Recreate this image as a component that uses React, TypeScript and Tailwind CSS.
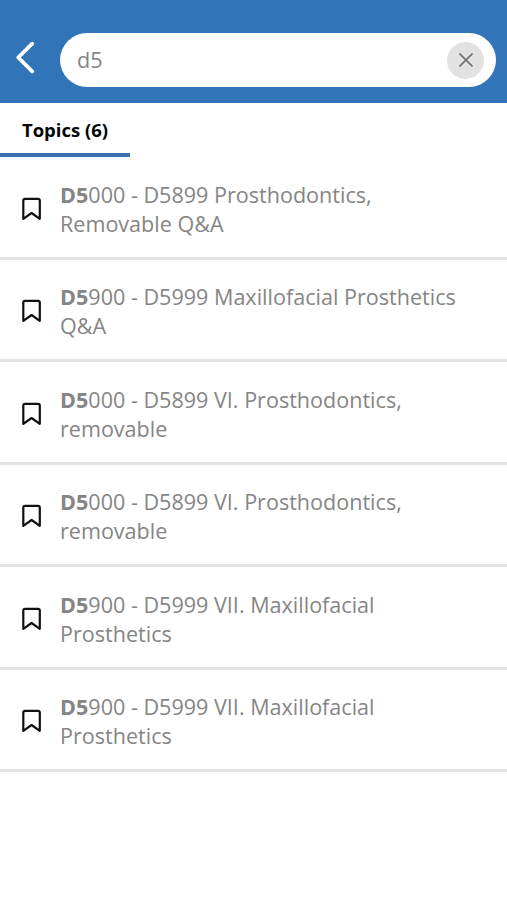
const topics = [
  ['000 - D5899 Prosthodontics,', 'Removable Q&A'],
  ['900 - D5999 Maxillofacial Prosthetics', 'Q&A'],
  ['000 - D5899 VI. Prosthodontics,', 'removable'],
  ['000 - D5899 VI. Prosthodontics,', 'removable'],
  ['900 - D5999 VII. Maxillofacial', 'Prosthetics'],
  ['900 - D5999 VII. Maxillofacial', 'Prosthetics'],
];

function Bookmark() {
  return (
    <svg width="20" height="24" viewBox="0 0 20 24" fill="none" stroke="#111" strokeWidth="2.2" strokeLinejoin="round">
      <path d="M1.3 3.6Q1.3 1.8 3.1 1.8H16Q17.8 1.8 17.8 3.6V21.8L9.6 16L1.3 21.8Z" />
    </svg>
  );
}

export default function App() {
  return (
    <div className="flex h-[900px] w-[507px] flex-col overflow-hidden bg-white font-['Open_Sans','Noto_Sans',sans-serif]">
      <header className="flex h-[103px] shrink-0 items-start bg-[#3274b8] pt-[33px] pr-[11px]">
        <button className="flex h-[54px] w-[60px] shrink-0 items-start pt-[7px] pl-[15px]" aria-label="Back">
          <svg width="20" height="34" viewBox="0 0 20 34" fill="none" stroke="white" strokeWidth="3.8" strokeLinecap="round" strokeLinejoin="round">
            <path d="M17.2 3.7L3.2 17.5L17.2 31.3" />
          </svg>
        </button>
        <div className="flex h-[54px] flex-1 items-center justify-between rounded-full bg-white pr-[12px] pl-[17px]">
          <span className="text-[21.6px] text-[#858585]">d5</span>
          <button className="flex size-[37px] items-center justify-center rounded-full bg-[#e2e2e2]" aria-label="Clear">
            <svg width="14" height="14" viewBox="0 0 14 14" stroke="#707070" strokeWidth="1.6">
              <path d="M0.5 0.5L13.5 13.5M13.5 0.5L0.5 13.5" />
            </svg>
          </button>
        </div>
      </header>
      <nav className="flex h-[54px] shrink-0">
        <div className="flex w-[130px] justify-center border-b-[4px] border-[#3b70ad] pt-[13px] text-[18.5px] leading-[28px] font-bold whitespace-nowrap text-[#050505]">Topics (6)</div>
      </nav>
      <ul>
        {topics.map(([first, second], i) => (
          <li key={i} className="flex h-[102.5px] items-center border-b-[3px] border-[#e4e4e4] pt-[4px] pl-[22px]">
            <Bookmark />
            <p className="ml-[18px] text-[21.57px] leading-[29px] whitespace-nowrap text-[#858585]">
              <b>D5</b>{first}<br />{second}
            </p>
          </li>
        ))}
      </ul>
    </div>
  );
}
